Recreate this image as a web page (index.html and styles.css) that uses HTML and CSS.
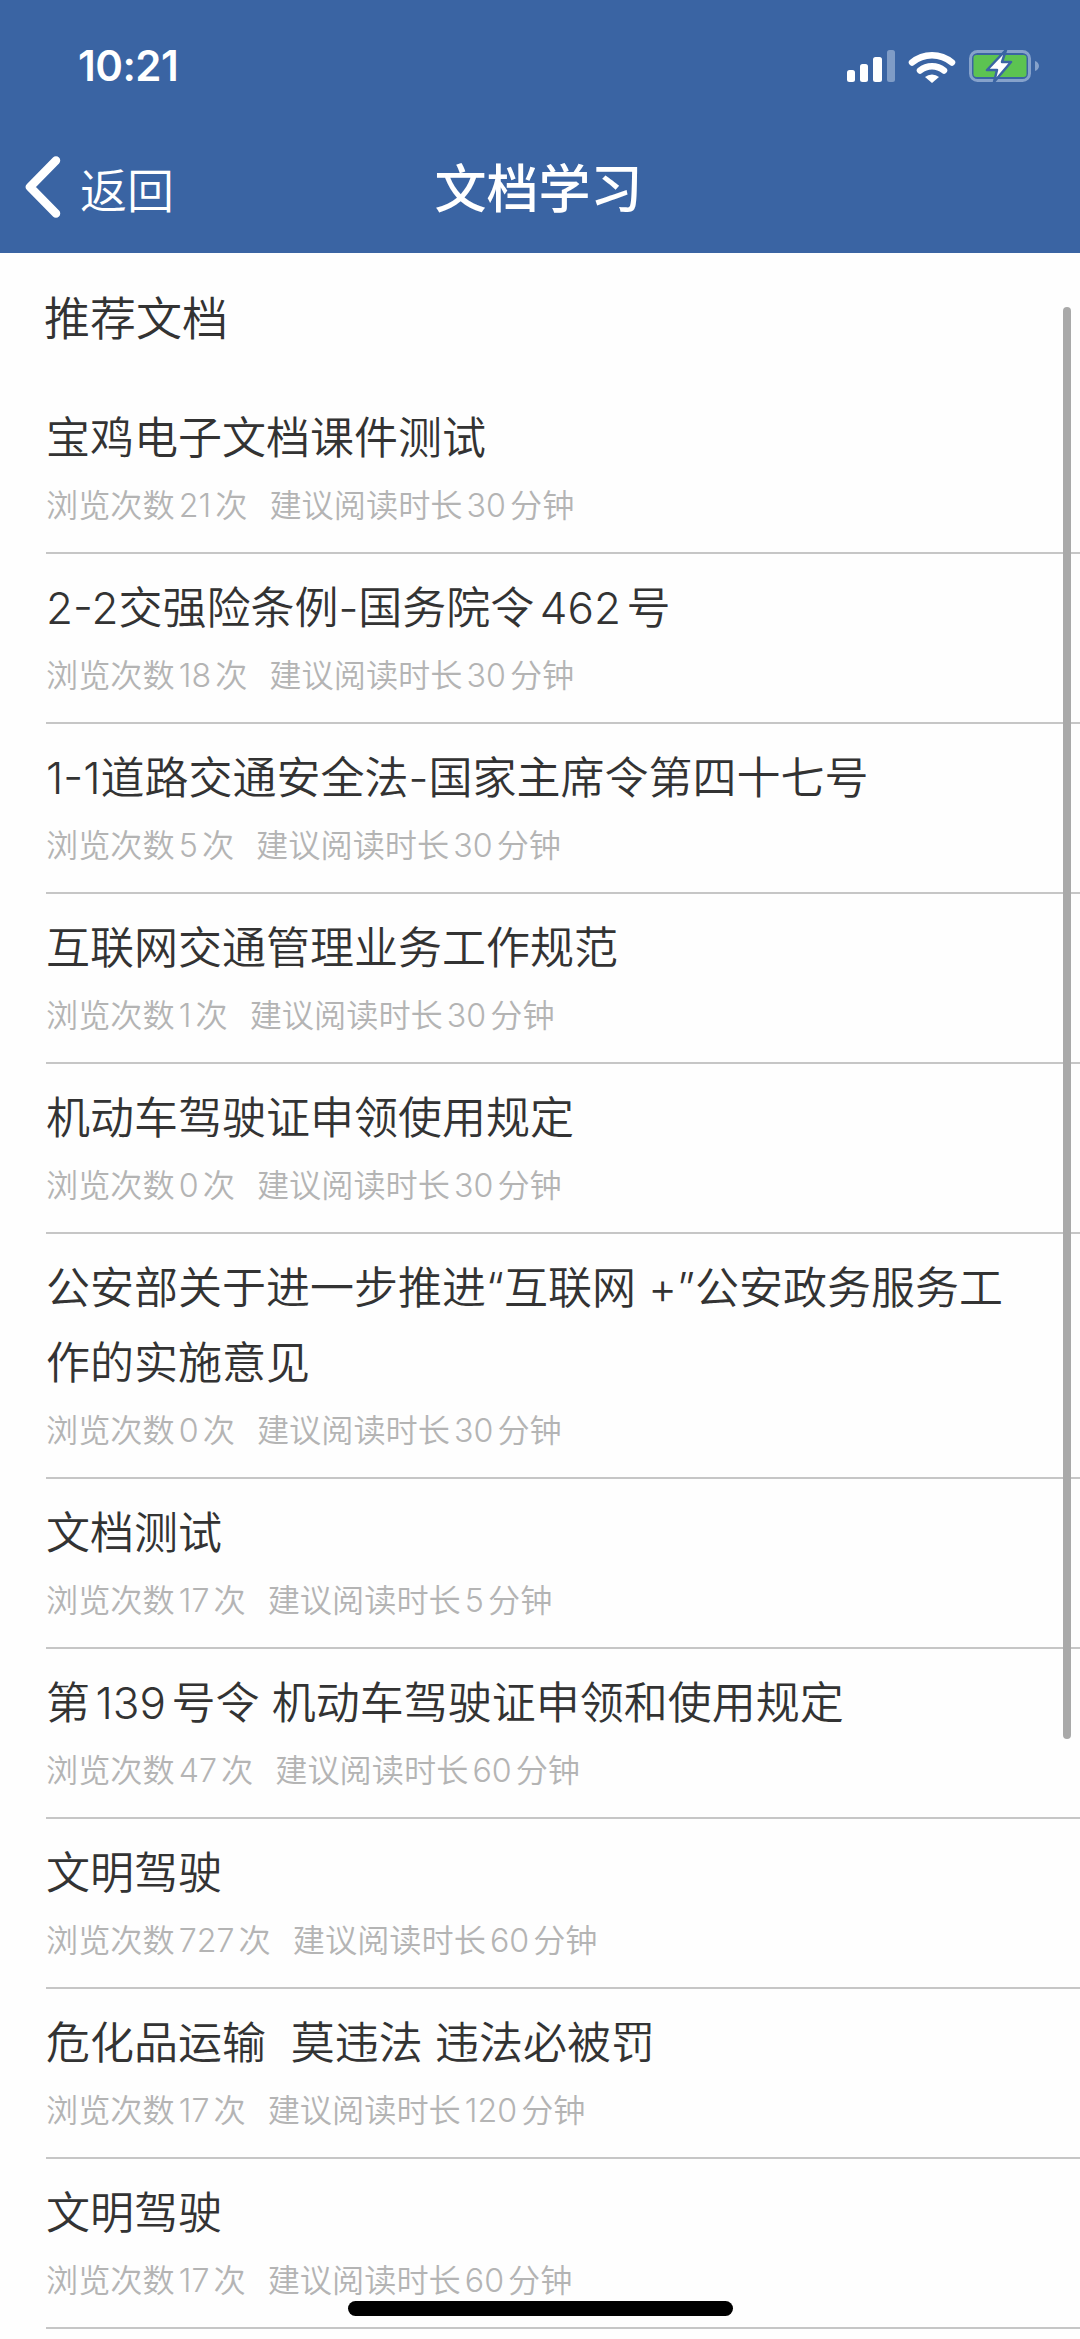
FILE: index.html
```html
<!DOCTYPE html>
<html lang="zh-CN">
	<head>
		<meta charset="utf-8" />
		<title>文档学习</title>
		<link rel="stylesheet" href="styles.css">
	</head>
	<body>
		<div class="page">
			<header class="top">
				<div class="status">
					<span class="time">10:21</span>
					<svg class="status-icons" width="200" height="40" viewBox="0 0 200 40">
						<rect x="7" y="20" width="8" height="12" rx="2.5" fill="#fff"/>
						<rect x="20" y="14" width="8" height="18" rx="2.5" fill="#fff"/>
						<rect x="33" y="7" width="9" height="25" rx="2.5" fill="#fff"/>
						<rect x="47" y="0" width="8" height="32" rx="2.5" fill="#7f9cc6"/>
						<path d="M72 12.5a31 31 0 0 1 40 0" fill="none" stroke="#fff" stroke-width="6.5" stroke-linecap="round"/>
						<path d="M80 20.5a19 19 0 0 1 24 0" fill="none" stroke="#fff" stroke-width="6.5" stroke-linecap="round"/>
						<path d="M85 27a11 11 0 0 1 14 0l-7 6z" fill="#fff"/>
						<rect x="130.500" y="1.500" width="59" height="29" rx="7" fill="none" stroke="#86a2cb" stroke-width="3"/>
						<rect x="133.500" y="5" width="53" height="22" rx="3" fill="#5cc351"/>
						<path d="M195 11c2.500 .8 4 2.800 4 5s-1.500 4.200-4 5z" fill="#86a2cb"/>
						<path d="M166 0 147 20h10l-3 12 17-20h-9l4-12z" fill="#fff" stroke="#3a64a3" stroke-width="2.500" stroke-linejoin="round"/>
					</svg>
				</div>
				<nav class="navbar">
					<a class="back">
						<svg class="chevron" width="36" height="62" viewBox="0 0 36 62">
							<path d="M31 4.500 5 31l26 26.500" fill="none" stroke="#fff" stroke-width="8.500" stroke-linecap="round" stroke-linejoin="round"/>
						</svg>
						<span>返回</span>
					</a>
					<h1>文档学习</h1>
				</nav>
			</header>

			<main class="content">
				<h2>推荐文档</h2>
				<ul class="doc-list">
					<li>
						<p class="doc-name">宝鸡电子文档课件测试</p>
						<p class="doc-meta"><span>浏览次数21次</span><span>建议阅读时长30分钟</span></p>
					</li>
					<li>
						<p class="doc-name"><span class="tight">2-2</span>交强险条例-国务院令462号</p>
						<p class="doc-meta"><span>浏览次数18次</span><span>建议阅读时长30分钟</span></p>
					</li>
					<li>
						<p class="doc-name"><span class="tight">1-1</span>道路交通安全法-国家主席令第四十七号</p>
						<p class="doc-meta"><span>浏览次数5次</span><span>建议阅读时长30分钟</span></p>
					</li>
					<li>
						<p class="doc-name">互联网交通管理业务工作规范</p>
						<p class="doc-meta"><span>浏览次数1次</span><span>建议阅读时长30分钟</span></p>
					</li>
					<li>
						<p class="doc-name">机动车驾驶证申领使用规定</p>
						<p class="doc-meta"><span>浏览次数0次</span><span>建议阅读时长30分钟</span></p>
					</li>
					<li>
						<p class="doc-name">公安部关于进一步推进“互联网 +”公安政务服务工作的实施意见</p>
						<p class="doc-meta"><span>浏览次数0次</span><span>建议阅读时长30分钟</span></p>
					</li>
					<li>
						<p class="doc-name">文档测试</p>
						<p class="doc-meta"><span>浏览次数17次</span><span>建议阅读时长5分钟</span></p>
					</li>
					<li>
						<p class="doc-name">第139号令 机动车驾驶证申领和使用规定</p>
						<p class="doc-meta"><span>浏览次数47次</span><span>建议阅读时长60分钟</span></p>
					</li>
					<li>
						<p class="doc-name">文明驾驶</p>
						<p class="doc-meta"><span>浏览次数727次</span><span>建议阅读时长60分钟</span></p>
					</li>
					<li>
						<p class="doc-name">危化品运输&nbsp; 莫违法 违法必被罚</p>
						<p class="doc-meta"><span>浏览次数17次</span><span>建议阅读时长120分钟</span></p>
					</li>
					<li>
						<p class="doc-name">文明驾驶</p>
						<p class="doc-meta"><span>浏览次数17次</span><span>建议阅读时长60分钟</span></p>
					</li>
				</ul>
				<div class="scrollbar"></div>
			</main>
			<div class="home-bar"></div>
		</div>
	</body>
</html>
```

FILE: styles.css
```css
* {
	box-sizing: border-box;
}
html, body {
	margin: 0;
	padding: 0;
}
body {
	background: #fefefe;
	font-family: Inter, "Noto Sans CJK SC", sans-serif;
	text-autospace: normal;
}
.page {
	position: relative;
	width: 1080px;
	height: 2339px;
	overflow: hidden;
}

/* header */
.top {
	background: #3a64a3;
	color: #fff;
	height: 253px;
}
.status {
	display: flex;
	justify-content: space-between;
	align-items: flex-start;
	height: 127px;
	padding: 50px 40px 0 78px;
}
.time {
	font-weight: 600;
	font-size: 42px;
	line-height: 32px;
	letter-spacing: -0.5px;
}
.navbar {
	display: grid;
	grid-template-columns: 1fr auto 1fr;
	align-items: center;
	height: 120px;
	padding: 0 28px 0 25px;
}
.navbar h1 {
	margin: 0;
	padding-top: 5px;
	font-size: 52px;
	font-weight: 500;
	line-height: 70px;
}
.back {
	display: flex;
	align-items: center;
	gap: 19px;
	font-size: 47px;
	font-weight: 350;
}
.chevron {
	display: block;
}

/* list */
.content {
	position: relative;
	height: 2086px;
}
.content h2 {
	margin: 0;
	padding: 35px 0 0 44px;
	height: 131px;
	font-size: 46px;
	font-weight: 350;
	line-height: 60px;
	color: #333;
}
.doc-list {
	list-style: none;
	margin: 0;
	padding: 0;
}
.doc-list li {
	margin-left: 46px;
	padding: 17px 40px 26px 0;
	border-bottom: 2px solid #c6c6c6;
}
.doc-name {
	margin: 0;
	font-size: 44px;
	font-weight: 350;
	line-height: 75px;
	color: #333;
}
.tight {
	text-autospace: no-autospace;
}
.doc-meta {
	display: flex;
	gap: 22px;
	margin: 10px 0 0;
	font-size: 32.2px;
	font-weight: 350;
	line-height: 40px;
	color: #b4b4b4;
}
.scrollbar {
	position: absolute;
	left: 1063px;
	top: 54px;
	width: 8px;
	height: 1432px;
	border-radius: 4px;
	background: #a9a9a9;
}
.home-bar {
	position: absolute;
	left: 348px;
	top: 2301px;
	width: 385px;
	height: 15px;
	border-radius: 8px;
	background: #000;
}
```
